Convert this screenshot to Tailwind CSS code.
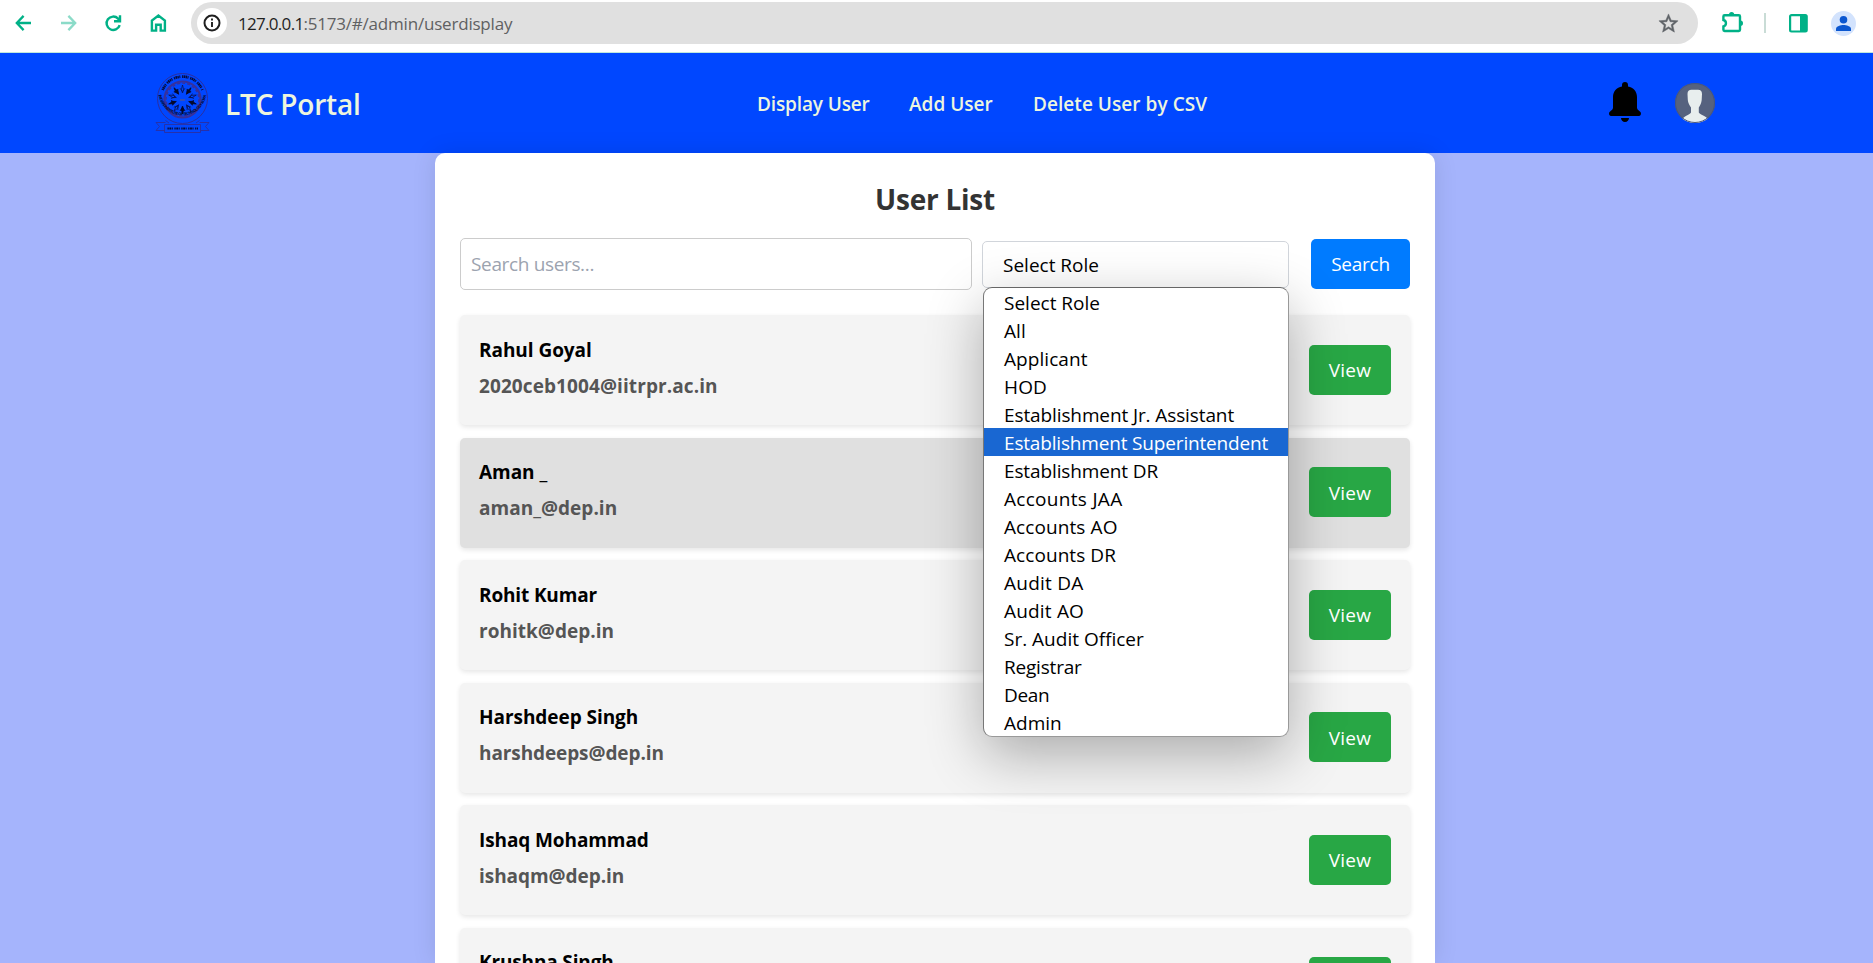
<!DOCTYPE html>
<html lang="en">
<head>
<meta charset="utf-8">
<title>LTC Portal</title>
<script src="https://cdn.jsdelivr.net/npm/@tailwindcss/browser@4"></script>
</head>
<body class="flex h-[963px] flex-col overflow-hidden bg-[#a5b4fc] font-['Open_Sans',sans-serif] text-[19px] text-black">

<!-- Browser toolbar -->
<div class="flex h-[53px] shrink-0 border-b border-[#bfe8dd] bg-white pt-[2px]">
  <div class="ml-[11px] flex h-[42px] w-[180px] items-center gap-[21px] text-[#00b187]">
    <svg class="size-6 shrink-0" viewBox="0 0 24 24" fill="none" stroke="currentColor" stroke-width="2.3"><path d="M20 12H6M12.6 4.9L5.8 12l6.8 7.1"/></svg>
    <svg class="size-6 shrink-0 opacity-45" viewBox="0 0 24 24" fill="none" stroke="currentColor" stroke-width="2.3"><path d="M5 12h14M12.4 4.9l6.8 7.1-6.8 7.1"/></svg>
    <svg class="size-6 shrink-0" viewBox="0 0 24 24" fill="none" stroke="currentColor" stroke-width="2.4"><path d="M18.7 14.2a6.7 6.7 0 1 1-1.6-6.6l1.4 1.6"/><path d="M19 4.2v6h-6"/></svg>
    <svg class="size-6 shrink-0" viewBox="0 0 24 24" fill="none" stroke="currentColor" stroke-width="2.4"><path d="M5.9 19.6V9.6L12.4 4.6l6.5 5v10h-4.2v-5.8h-4.6v5.8z"/></svg>
  </div>
  <div class="flex h-[42px] w-[1507px] items-center rounded-full bg-[#e0e0e0] pl-[6px] pr-[18px]">
    <div class="flex size-[30px] items-center justify-center rounded-full bg-white">
      <svg class="size-5" viewBox="0 0 20 20" fill="none" stroke="#1f1f1f"><circle cx="10" cy="10" r="7.5" stroke-width="2"/><path d="M10 9v5M10 5.6v2" stroke-width="1.9"/></svg>
    </div>
    <div class="ml-[11px] whitespace-nowrap pt-px text-[17px] text-[#5f6062]"><span class="tracking-[-0.7px] text-[#1f1f1f]">127.0.0.1</span><span class="tracking-[-0.2px]">:5173/#/admin/userdisplay</span></div>
    <svg class="ml-auto size-[23px]" viewBox="0 0 24 24" fill="#5f6368" stroke="#5f6368" stroke-width=".5"><path d="M22 9.24l-7.19-.62L12 2 9.19 8.63 2 9.24l5.46 4.73L5.82 21 12 17.27 18.18 21l-1.63-7.03L22 9.24zM12 15.4l-3.76 2.27 1-4.28-3.32-2.88 4.38-.38L12 6.1l1.71 4.04 4.38.38-3.32 2.88 1 4.28L12 15.4z"/></svg>
  </div>
  <div class="ml-[23px] flex h-[42px] items-center">
    <svg class="h-6 w-[23px]" viewBox="0 0 23 24" fill="none" stroke="#00b187" stroke-width="2.4"><path d="M3.6 4.200h14.200q1.200 0 1.200 1.200v13.400q0 1.200-1.200 1.200H3.600q-1.200 0-1.200-1.200v-3.400c3.400-.8 3.400-5.600 0-6.400V5.400q0-1.200 1.200-1.200z"/><path d="M8 3.700a2.600 2.600 0 0 1 5.200 0zM19.400 9.600a2.600 2.600 0 0 1 0 5.200z" fill="#00b187" stroke="none"/></svg>
    <div class="ml-[20px] h-5 w-[2px] bg-[#c9dcd6]"></div>
    <svg class="ml-[23px] h-5 w-[19px]" viewBox="0 0 19 20"><rect x="1.1" y="2.1" width="16.6" height="16.4" rx="1.4" fill="none" stroke="#00b187" stroke-width="2.2"/><path d="M11 2h6.7v16.5H11z" fill="#00b187"/></svg>
    <svg class="ml-[23px] size-[25px]" viewBox="0 0 25 25"><circle cx="12.5" cy="12.5" r="12.5" fill="#d3e3fd"/><circle cx="12.5" cy="8.8" r="3.8" fill="#0b57d0"/><path d="M5 20v-2.2c0-2.6 4.8-3.8 7.5-3.8s7.5 1.2 7.5 3.8V20z" fill="#0b57d0"/></svg>
  </div>
</div>

<!-- Site header -->
<header class="flex h-[100px] shrink-0 items-center bg-[#0047ff] pl-[155px] pr-[158px] font-semibold text-[#edf5de]">
  <svg class="h-[60px] w-[55px]" viewBox="0 0 55 60" fill="none">
    <defs>
      <path id="ringBottom" d="M3.6 22A24.200 24.200 0 0 0 51.4 22"/>
      <path id="ringTop" d="M7.6 17A21.5 21.5 0 0 1 47.4 17"/>
      <g id="figure"><path d="M27.5 20l-1.200-3.200 1.200-4.800 1.200 4.800z"/><path d="M25 15.200l2.500 3.300 2.500-3.300"/></g>
    </defs>
    <circle cx="27.5" cy="25.500" r="25" stroke="#2b2fa0" stroke-width="1"/>
    <circle cx="27.5" cy="26.500" r="18" stroke="#38309a" stroke-width="2.200"/>
    <circle cx="27.5" cy="26.500" r="16.400" stroke="#38309a" stroke-width="1.400" stroke-dasharray="3 2.100"/>
    <use href="#ringTop" stroke="#070b38" stroke-width="2.600" stroke-dasharray="1.100 .5 1.700 .4 1.300 .5 1 1.800"/>
    <text font-size="3.900" font-weight="700" fill="#05082c"><textPath href="#ringBottom" textLength="70">INDIAN INSTITUTE OF TECHNOLOGY ROPAR</textPath></text>
    <g fill="#04082c" stroke="#04082c" stroke-width=".8">
      <use href="#figure" transform="rotate(36 27.5 26.5)"/><use href="#figure" transform="rotate(108 27.5 26.5)"/><use href="#figure" transform="rotate(180 27.5 26.5)"/><use href="#figure" transform="rotate(252 27.5 26.5)"/><use href="#figure" transform="rotate(324 27.5 26.5)"/>
    </g>
    <g stroke="#07104e" stroke-width=".7">
      <use href="#figure" transform="rotate(0 27.5 26.5)"/><use href="#figure" transform="rotate(72 27.5 26.5)"/><use href="#figure" transform="rotate(144 27.5 26.5)"/><use href="#figure" transform="rotate(216 27.5 26.5)"/><use href="#figure" transform="rotate(288 27.5 26.5)"/>
    </g>
    <path d="M25 27h5" stroke="#6a5a70" stroke-width="1"/>
    <path d="M9.500 51.500H45.500V59.500H9.500zM9.500 57.500H1l3.500-4-3.500-4h9.500M45.500 57.500H54l-3.500-4 3.500-4h-9.500M14 50l-3.500-2.500M41 50l3.500-2.500" stroke="#2b2fa0" stroke-width=".9"/>
    <path d="M12.500 55.500H43" stroke="#070b38" stroke-width="2.200" stroke-dasharray="1.300 .6 1.800 .6 1 1.600"/>
  </svg>
  <div class="ml-[15px] w-[151px] whitespace-nowrap pt-[1px] text-[28px] tracking-[-0.2px]">LTC Portal</div>
  <nav class="ml-[381px] flex gap-[40px] whitespace-nowrap pt-[3px]">
    <a class="w-[112px] tracking-[-0.13px]">Display User</a>
    <a class="w-[84px]">Add User</a>
    <a class="tracking-[0.05px]">Delete User by CSV</a>
  </nav>
  <svg class="ml-auto h-10 w-8 -translate-y-px" viewBox="0 0 32 40"><path d="M16 0a3 3 0 0 0-3 3v1.500C7.500 5.500 4 9.500 4 15v10.500c0 1.300-.5 2-1.500 2.800L.8 29.700C-.6 31 0 34 2 34h28c2 0 2.600-3 1.200-4.300l-1.700-1.400c-1-.8-1.500-1.500-1.500-2.800V15c0-5.500-3.500-9.500-9-10.500V3a3 3 0 0 0-3-3zM12 36h8c0 2.300-1.700 4-4 4s-4-1.700-4-4z"/></svg>
  <svg class="ml-[34px] size-10" viewBox="0 0 40 40"><defs><clipPath id="disc"><circle cx="20" cy="20" r="20"/></clipPath></defs><g clip-path="url(#disc)"><path fill="#56627f" d="M0 0h40v40H0z"/><path fill="#e8eeee" d="M12.500 11c0-3 1.500-4.300 4-4.300h6.500c2.500 0 4 1.300 4 4.300l-.3 6c-.3 3-1.700 5.500-2.900 7.500v5c1 2 7.500 3.500 9.500 7V41H7v-4.500c2-3.500 8-5 9-7v-5c-1.300-2-2.900-4.500-3.200-7.500z"/></g><circle cx="20" cy="20" r="19.500" fill="none" stroke="#46557f"/></svg>
</header>

<!-- User list -->
<main class="relative ml-[435px] min-h-0 w-[1000px] flex-1 rounded-t-[10px] bg-white px-[25px] pt-[24px] shadow-[0_0_25px_rgba(0,0,0,0.1)]">
  <h1 class="h-[45px] text-center text-[28px] font-bold leading-[45px] tracking-[-0.25px] text-[#333]">User List</h1>
  <div class="mt-[16px] flex h-[52px] items-center">
    <div class="flex h-[52px] w-[512px] items-center rounded-[5px] border border-[#ccc] pl-[10px] pt-px tracking-[-0.35px] text-[#9ca3af]">Search users...</div>
    <div class="relative ml-[10px]">
      <div class="mt-px flex h-[47px] w-[307px] items-center rounded-[5px] border border-[#d1d5db] pl-[20px]"><span class="pt-[2px]">Select Role</span></div>
      <!-- Open role menu -->
      <ul class="absolute left-[1px] top-[47px] z-10 w-[306px] overflow-hidden whitespace-nowrap rounded-[9px] border border-[#999] border-l-[#777] border-t-[#666] bg-white leading-[30px] shadow-[0_18px_56px_rgba(0,0,0,0.3)] *:h-7 *:pl-[20px]">
        <li>Select Role</li>
        <li class="tracking-[0.1px]">All</li>
        <li class="tracking-[0.06px]">Applicant</li>
        <li class="tracking-[0.14px]">HOD</li>
        <li class="tracking-[-0.11px]">Establishment Jr. Assistant</li>
        <li class="bg-[#1967d2] tracking-[-0.17px] text-white">Establishment Superintendent</li>
        <li class="tracking-[-0.12px]">Establishment DR</li>
        <li class="tracking-[0.3px]">Accounts JAA</li>
        <li class="tracking-[0.09px]">Accounts AO</li>
        <li class="tracking-[0.07px]">Accounts DR</li>
        <li class="tracking-[0.24px]">Audit DA</li>
        <li class="tracking-[0.18px]">Audit AO</li>
        <li>Sr. Audit Officer</li>
        <li class="tracking-[-0.2px]">Registrar</li>
        <li class="tracking-[-0.35px]">Dean</li>
        <li>Admin</li>
      </ul>
    </div>
    <div class="ml-[22px] flex h-[50px] w-[99px] items-center justify-center rounded-[5px] bg-[#007bff] pt-px tracking-[-0.25px] text-white">Search</div>
  </div>

  <div class="mt-[25px] flex flex-col gap-[12.5px] font-bold leading-[30px] tracking-[-0.05px] *:flex *:h-[110px] *:items-start *:justify-between *:rounded-[5px] *:bg-[#f4f4f4] *:px-[19px] *:pt-[19.8px] *:shadow-[0_2px_5px_rgba(0,0,0,0.1)]">
    <div>
      <div><div>Rahul Goyal</div><div class="mt-[6px] tracking-[0.09px] text-[#555]">2020ceb1004@iitrpr.ac.in</div></div>
      <div class="mt-[10px] flex h-[50px] w-[82px] items-center justify-center rounded-[5px] bg-[#28a745] pt-px font-normal tracking-[0.2px] text-white">View</div>
    </div>
    <div class="bg-[#e0e0e0]!">
      <div><div>Aman _</div><div class="mt-[6px] tracking-[0.02px] text-[#555]">aman_@dep.in</div></div>
      <div class="mt-[10px] flex h-[50px] w-[82px] items-center justify-center rounded-[5px] bg-[#28a745] pt-px font-normal tracking-[0.2px] text-white">View</div>
    </div>
    <div>
      <div><div class="tracking-[-0.15px]">Rohit Kumar</div><div class="mt-[6px] tracking-[0.02px] text-[#555]">rohitk@dep.in</div></div>
      <div class="mt-[10px] flex h-[50px] w-[82px] items-center justify-center rounded-[5px] bg-[#28a745] pt-px font-normal tracking-[0.2px] text-white">View</div>
    </div>
    <div>
      <div><div>Harshdeep Singh</div><div class="mt-[6px] tracking-[-0.1px] text-[#555]">harshdeeps@dep.in</div></div>
      <div class="mt-[10px] flex h-[50px] w-[82px] items-center justify-center rounded-[5px] bg-[#28a745] pt-px font-normal tracking-[0.2px] text-white">View</div>
    </div>
    <div>
      <div><div class="tracking-[-0.1px]">Ishaq Mohammad</div><div class="mt-[6px] text-[#555]">ishaqm@dep.in</div></div>
      <div class="mt-[10px] flex h-[50px] w-[82px] items-center justify-center rounded-[5px] bg-[#28a745] pt-px font-normal tracking-[0.2px] text-white">View</div>
    </div>
    <div>
      <div><div class="tracking-[-0.15px]">Krushna Singh</div></div>
      <div class="mt-[10px] h-[50px] w-[82px] rounded-[5px] bg-[#28a745]"></div>
    </div>
  </div>
</main>
</body>
</html>
